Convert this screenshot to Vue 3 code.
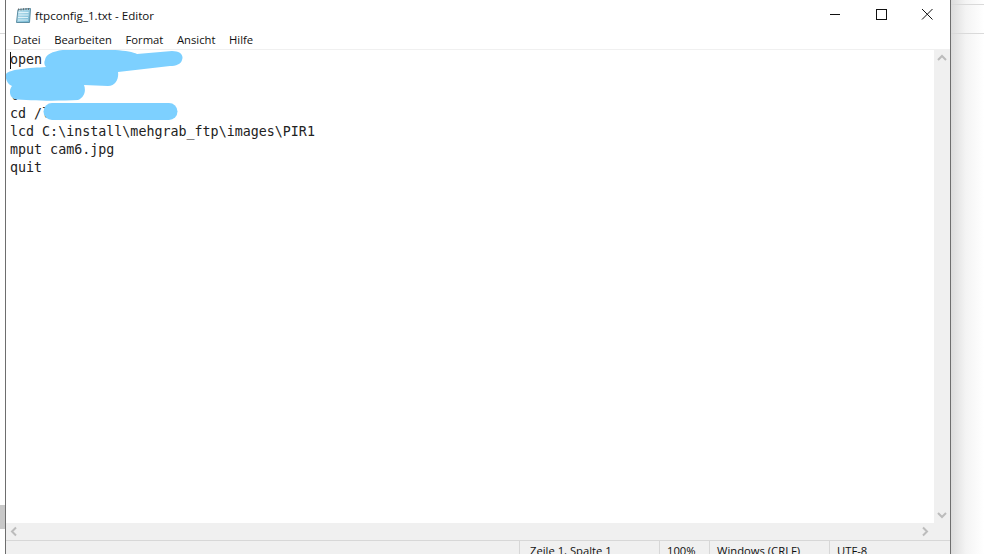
<script setup>
const menus = ['Datei', 'Bearbeiten', 'Format', 'Ansicht', 'Hilfe']
const lines = ['open', '', 'l', 'cd /l', 'lcd C:\\install\\mehgrab_ftp\\images\\PIR1', 'mput cam6.jpg', 'quit']
const cells = [
  { text: 'Zeile 1, Spalte 1', w: 140 },
  { text: '100%', w: 50 },
  { text: 'Windows (CRLF)', w: 120 },
  { text: 'UTF-8', w: 121 }
]
</script>

<template>
  <div class="screen">
    <div class="left-strip">
      <div class="strip-line"></div>
      <div class="strip-block"></div>
    </div>
    <div class="window">
      <header class="titlebar">
        <svg class="app-icon" width="17" height="17" viewBox="0 0 17 17">
          <defs>
            <linearGradient id="pad" x1="0" y1="0" x2="1" y2="1">
              <stop offset="0" stop-color="#c4e8f4" />
              <stop offset="1" stop-color="#6fb4d0" />
            </linearGradient>
          </defs>
          <path d="M3 2.5 L15.5 1.5 L14.5 15.5 L1.5 15.5 Z" fill="url(#pad)" stroke="#5d8ea3" stroke-width="1" />
          <path d="M3.5 5.5 H13.5 M3.5 8 H13.5 M3 10.5 H13 M3 13 H13" stroke="#e4f5fb" stroke-width="0.9" />
          <path d="M3.5 1.5 V3.5 M6 1.5 V3.5 M8.5 1.2 V3.2 M11 1 V3 M13.5 1 V3" stroke="#666" stroke-width="0.9" />
        </svg>
        <span class="title">ftpconfig_1.txt - Editor</span>
        <div class="controls">
          <svg class="ctl" width="46" height="30" viewBox="0 0 46 30"><path d="M18 14.5 H28" stroke="#111" fill="none" /></svg>
          <svg class="ctl" width="46" height="30" viewBox="0 0 46 30"><rect x="18.5" y="9.5" width="10" height="10" stroke="#111" fill="none" /></svg>
          <svg class="ctl" width="46" height="30" viewBox="0 0 46 30"><path d="M18 9 L28.5 19.5 M28.5 9 L18 19.5" stroke="#111" fill="none" /></svg>
        </div>
      </header>
      <nav class="menubar">
        <span v-for="m in menus" :key="m" class="menu">{{ m }}</span>
      </nav>
      <div class="middle">
        <div class="editor-col">
          <div class="editor">
            <div v-for="(l, i) in lines" :key="i" class="line">{{ l }}</div>
            <div class="caret"></div>
            <svg class="scribble" width="200" height="90" viewBox="6 50 200 90">
              <path fill="#7dd0ff" d="M45 60 C46 52 60 49 80 49 C105 49 130 50 137 54 L172 51 C180 51 184 55 182 60 C181 64 176 66 170 66 L118 72 C119 78 116 86 108 86 L84 85 C86 90 85 97 78 100 C60 101 30 101 14 99 C9 96 9 90 12 86 C7 84 5 78 6 74 C10 69 30 68 46 67 C44 65 44 62 45 60 Z" />
              <path fill="none" stroke="#7dd0ff" stroke-width="17" stroke-linecap="round" d="M52 111.5 L169 111.5" />
            </svg>
          </div>
          <div class="hscroll">
            <svg width="16" height="17" viewBox="0 0 16 17"><path d="M10 4.5 L6 8.5 L10 12.5" fill="none" stroke="#bcbcbc" stroke-width="2" /></svg>
            <svg width="16" height="17" viewBox="0 0 16 17"><path d="M6 4.5 L10 8.5 L6 12.5" fill="none" stroke="#bcbcbc" stroke-width="2" /></svg>
          </div>
        </div>
        <div class="vscroll">
          <svg width="16" height="16" viewBox="0 0 16 16"><path d="M4 10 L8 6 L12 10" fill="none" stroke="#bcbcbc" stroke-width="2" /></svg>
          <svg width="16" height="16" viewBox="0 0 16 16"><path d="M4 6 L8 10 L12 6" fill="none" stroke="#bcbcbc" stroke-width="2" /></svg>
        </div>
      </div>
      <footer class="statusbar">
        <span v-for="c in cells" :key="c.text" class="cell" :style="{ width: c.w + 'px' }">{{ c.text }}</span>
      </footer>
    </div>
    <div class="right-strip">
      <div class="rline first"></div>
      <div class="rline second"></div>
    </div>
  </div>
</template>

<style>
html, body { margin: 0; overflow: hidden; background: #fff; }
</style>

<style scoped>
.screen {
  width: 984px;
  height: 554px;
  display: flex;
  overflow: hidden;
  font-family: "Open Sans", "Noto Sans", sans-serif;
  color: #111;
  background: #fff;
}
.left-strip {
  width: 5px;
  flex: none;
  background: #fff;
  display: flex;
  flex-direction: column;
}
.strip-line { height: 1px; margin-top: 33px; background: #d8d8d8; }
.strip-block { height: 24px; margin-top: 471px; background: #c8c8c8; }
.window {
  width: 944px;
  flex: none;
  display: flex;
  flex-direction: column;
  background: #fff;
  border-left: 1px solid #6e6e6e;
  border-right: 1px solid #6e6e6e;
}
.titlebar {
  height: 30px;
  flex: none;
  display: flex;
  align-items: center;
  padding-left: 9px;
}
.app-icon { flex: none; }
.title { margin-left: 3px; font-size: 11.6px; white-space: nowrap; }
.controls { margin-left: auto; display: flex; }
.ctl { display: block; }
.menubar {
  height: 19px;
  flex: none;
  display: flex;
  align-items: center;
  padding-left: 7px;
  gap: 13.6px;
  border-bottom: 1px solid #f0f0f0;
  font-size: 11.25px;
}
.menu { white-space: nowrap; }
.middle { flex: 1; min-height: 0; display: flex; }
.editor-col { flex: 1; min-width: 0; display: flex; flex-direction: column; }
.editor {
  flex: 1;
  position: relative;
  padding: 1px 0 0 4px;
  font-family: "DejaVu Sans Mono", monospace;
  font-size: 13.33px;
  line-height: 18px;
  color: #222;
}
.line { height: 18px; white-space: pre; }
.caret { position: absolute; left: 4px; top: 2px; width: 1px; height: 17px; background: #111; }
.scribble { position: absolute; left: 0; top: 0; }
.hscroll {
  height: 17px;
  flex: none;
  display: flex;
  justify-content: space-between;
  background: #f0f0f0;
  padding: 0 1px 0 0;
}
.vscroll {
  width: 16px;
  flex: none;
  display: flex;
  flex-direction: column;
  background: #f0f0f0;
}
.vscroll svg:nth-child(2) { margin-top: auto; margin-bottom: 17px; }
.statusbar {
  height: 13px;
  flex: none;
  display: flex;
  justify-content: flex-end;
  background: #f0f0f0;
  border-top: 1px solid #d7d7d7;
  font-size: 11.25px;
  overflow: hidden;
}
.cell {
  box-sizing: border-box;
  padding-left: 7px;
  border-left: 1px solid #d7d7d7;
  white-space: nowrap;
  line-height: 19px;
}
.cell:first-child { padding-left: 10px; }
.right-strip {
  flex: 1;
  background: linear-gradient(90deg, #dcdcdc, #f4f4f4 45%, #fff);
  display: flex;
  flex-direction: column;
}
.rline { height: 1px; background: #dadada; }
.rline.first { margin-top: 4px; }
.rline.second { margin-top: 28px; }
</style>
